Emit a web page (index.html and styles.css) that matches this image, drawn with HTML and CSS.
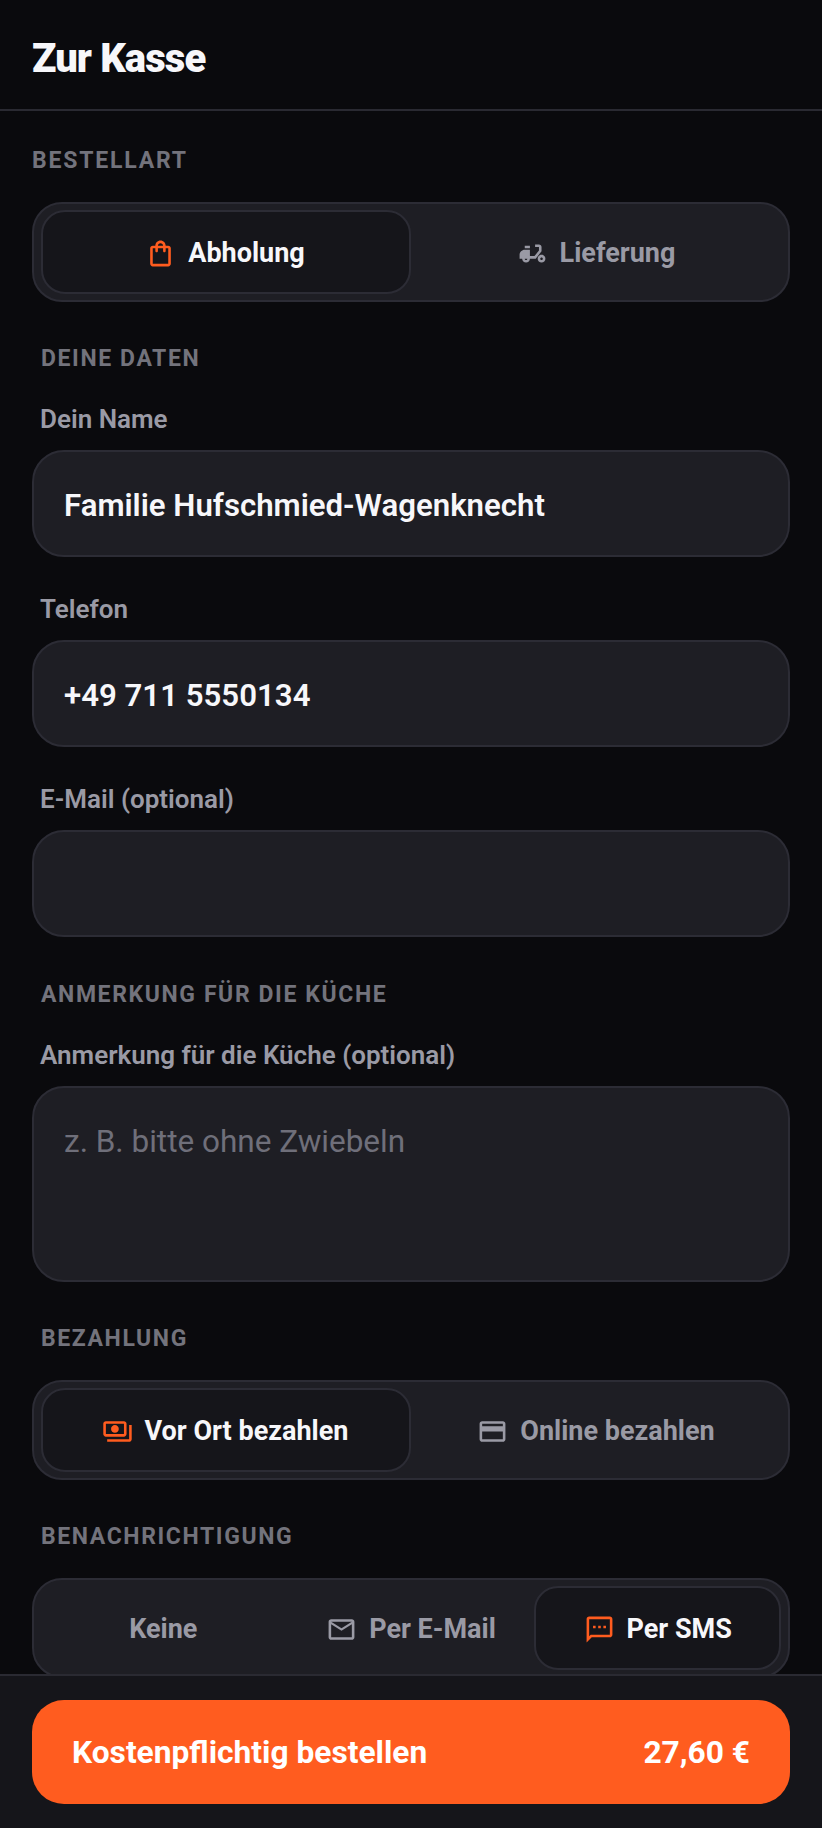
FILE: index.html
```html
<!DOCTYPE html>
<html lang="de">
<head>
<meta charset="UTF-8">
<meta name="viewport" content="width=device-width, initial-scale=1.0">
<title>Zur Kasse</title>
<link rel="stylesheet" href="styles.css">
</head>
<body>
<div class="page">
  <header class="topbar">
    <h1>Zur Kasse</h1>
  </header>

  <main class="content">
    <div class="section-title first">BESTELLART</div>
    <div class="segmented">
      <button class="seg active">
        <svg viewBox="0 0 24 24"><path d="M18 6h-2c0-2.21-1.79-4-4-4S8 3.79 8 6H6c-1.1 0-2 .9-2 2v12c0 1.1.9 2 2 2h12c1.1 0 2-.9 2-2V8c0-1.1-.9-2-2-2zm-6-2c1.1 0 2 .9 2 2h-4c0-1.1.9-2 2-2zm6 16H6V8h2v2c0 .55.45 1 1 1s1-.45 1-1V8h4v2c0 .55.45 1 1 1s1-.45 1-1V8h2v12z"/></svg>
        Abholung
      </button>
      <button class="seg">
        <svg viewBox="0 0 24 24"><path d="M19 7c0-1.1-.9-2-2-2h-3v2h3v2.65L13.52 14H10V9H6c-2.21 0-4 1.79-4 4v3h2c0 1.66 1.34 3 3 3s3-1.34 3-3h4.48L19 10.35V7zM7 17c-.55 0-1-.45-1-1h2c0 .55-.45 1-1 1zM6 6h4v2H6zM19 13c-1.66 0-3 1.34-3 3s1.34 3 3 3 3-1.34 3-3-1.34-3-3-3zm0 4c-.55 0-1-.45-1-1s.45-1 1-1 1 .45 1 1-.45 1-1 1z"/></svg>
        Lieferung
      </button>
    </div>

    <div class="section-title">DEINE DATEN</div>
    <label class="field">
      <span>Dein Name</span>
      <input type="text" value="Familie Hufschmied-Wagenknecht">
    </label>
    <label class="field">
      <span>Telefon</span>
      <input type="tel" value="+49 711 5550134">
    </label>
    <label class="field">
      <span>E-Mail (optional)</span>
      <input type="email">
    </label>

    <div class="section-title note-title">ANMERKUNG FÜR DIE KÜCHE</div>
    <label class="field">
      <span>Anmerkung für die Küche (optional)</span>
      <textarea placeholder="z. B. bitte ohne Zwiebeln"></textarea>
    </label>

    <div class="section-title">BEZAHLUNG</div>
    <div class="segmented">
      <button class="seg active">
        <svg viewBox="0 0 24 24"><path d="M19 14V6c0-1.1-.9-2-2-2H3c-1.1 0-2 .9-2 2v8c0 1.1.9 2 2 2h14c1.1 0 2-.9 2-2zm-2 0H3V6h14v8zm-7-7c-1.66 0-3 1.34-3 3s1.34 3 3 3 3-1.34 3-3-1.34-3-3-3zm13 0v11c0 1.1-.9 2-2 2H4v-2h17V7h2z"/></svg>
        Vor Ort bezahlen
      </button>
      <button class="seg">
        <svg viewBox="0 0 24 24"><path d="M20 4H4c-1.11 0-1.99.89-1.99 2L2 18c0 1.11.89 2 2 2h16c1.11 0 2-.89 2-2V6c0-1.11-.89-2-2-2zm0 14H4v-6h16v6zm0-10H4V6h16v2z"/></svg>
        Online bezahlen
      </button>
    </div>

    <div class="section-title">BENACHRICHTIGUNG</div>
    <div class="segmented">
      <button class="seg">Keine</button>
      <button class="seg">
        <svg viewBox="0 0 24 24"><path d="M20 4H4c-1.1 0-1.99.9-1.99 2L2 18c0 1.1.9 2 2 2h16c1.1 0 2-.9 2-2V6c0-1.1-.9-2-2-2zm0 14H4V8l8 5 8-5v10zm-8-7L4 6h16l-8 5z"/></svg>
        Per E-Mail
      </button>
      <button class="seg active">
        <svg viewBox="0 0 24 24"><path d="M20 2H4c-1.1 0-1.99.9-1.99 2L2 22l4-4h14c1.1 0 2-.9 2-2V4c0-1.1-.9-2-2-2zm0 14H5.17L4 17.17V4h16v12zM7 9h2v2H7zm4 0h2v2h-2zm4 0h2v2h-2z"/></svg>
        Per SMS
      </button>
    </div>
  </main>

  <footer class="checkout">
    <button class="order-button">
      <span>Kostenpflichtig bestellen</span>
      <span>27,60 €</span>
    </button>
  </footer>
</div>
</body>
</html>
```

FILE: styles.css
```css
* {
    box-sizing: border-box;
}

html, body {
    margin: 0;
    padding: 0;
    background-color: #0a0a0d;
    font-family: Roboto, "Liberation Sans", sans-serif;
}

.page {
    height: 100vh;
    display: flex;
    flex-direction: column;
    overflow: hidden;
}

/* Kopfzeile */
.topbar {
    flex: none;
    height: 111px;
    padding: 8px 32px 0;
    display: flex;
    align-items: center;
    border-bottom: 2px solid #2a2a32;
}

.topbar h1 {
    margin: 0;
    font-size: 40px;
    font-weight: 900;
    letter-spacing: -0.9px;
    color: #f7f7fa;
}

/* Formular */
.content {
    flex: 1;
    min-height: 0;
    overflow: hidden;
    padding: 0 32px;
}

.section-title {
    margin: 43px 0 27px 9px;
    font-size: 23px;
    line-height: 28px;
    font-weight: 700;
    letter-spacing: 1.6px;
    color: #73737c;
}

.section-title.first {
    margin: 36px 0 27px 0;
    letter-spacing: 1.8px;
}

.section-title.note-title {
    margin-top: 44px;
}

.section-title + .field {
    margin-top: 30px;
}

.field {
    display: block;
    margin-bottom: 36px;
}

.field span {
    display: block;
    margin: 0 0 15px 8px;
    font-size: 26px;
    line-height: 32px;
    font-weight: 600;
    color: #9a9aa5;
}

.field input,
.field textarea {
    display: block;
    width: 100%;
    padding: 3px 30px 0;
    background-color: #1e1e24;
    border: 2px solid #2c2c35;
    border-radius: 32px;
    outline: none;
    font-family: inherit;
    font-size: 31.2px;
    font-weight: 600;
    color: #f7f7fa;
}

.field input {
    height: 107px;
}

.field textarea {
    height: 196px;
    padding-top: 35px;
    font-size: 31.5px;
    font-weight: 400;
    resize: none;
}

.field textarea::placeholder {
    color: #6f6f7a;
    opacity: 1;
}

/* Umschalter */
.segmented {
    display: grid;
    grid-auto-flow: column;
    grid-auto-columns: 1fr;
    height: 100px;
    padding: 6px 7px;
    background-color: #1e1e24;
    border: 2px solid #2c2c35;
    border-radius: 30px;
}

.seg {
    display: flex;
    align-items: center;
    justify-content: center;
    gap: 12px;
    padding: 2px 0 0;
    background: none;
    border: 2px solid transparent;
    border-radius: 24px;
    font-family: inherit;
    font-size: 27px;
    font-weight: 700;
    color: #9a9aa5;
}

.seg:first-child {
    padding-right: 2px;
}

.seg svg {
    width: 31px;
    height: 31px;
    fill: currentColor;
}

.seg.active {
    background-color: #15151a;
    border-color: #2c2c35;
    color: #f7f7fa;
}

.seg.active svg {
    fill: #ff5c1f;
}

/* Bestellen */
.checkout {
    flex: none;
    height: 154px;
    padding: 24px 32px 0;
    background-color: #15151a;
    border-top: 2px solid #2a2a32;
}

.order-button {
    width: 100%;
    height: 104px;
    padding: 0 40px;
    display: flex;
    align-items: center;
    justify-content: space-between;
    background-color: #ff5c1f;
    border: none;
    border-radius: 32px;
    font-family: inherit;
    font-size: 31.7px;
    font-weight: 700;
    color: #fff;
}
```
